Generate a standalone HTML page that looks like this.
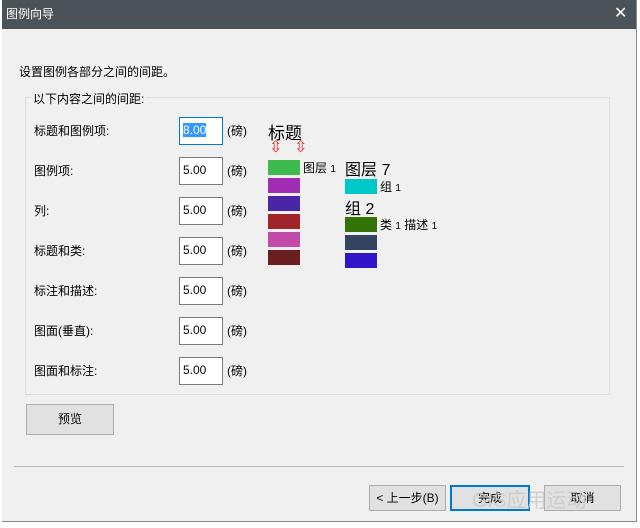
<!DOCTYPE html>
<html><head><meta charset="utf-8"><style>
body{margin:0;width:640px;height:528px;background:#fff;position:relative;overflow:hidden;font-family:"Liberation Sans","Noto Sans CJK SC",sans-serif;font-size:12px;color:#000}
.a{position:absolute}
.dlg{left:2px;top:0;width:634px;height:521px;background:#f0f0f0;border-right:1px solid #888;border-bottom:1px solid #888}
.tb{left:2px;top:0;width:634px;height:29px;background:#4b5359;color:#fff;font-size:12px}
.inp{background:#fff;border:1px solid #7a7a7a;font-size:12px;line-height:18px;padding-left:3px;box-sizing:border-box;width:44px;height:28px;padding-top:3px}
.btn{background:#e1e1e1;border:1px solid #adadad;box-sizing:border-box;text-align:center;font-size:12px}
.sw{width:32px;height:15px}
</style></head><body>
<div class="a dlg"></div>
<div class="a tb"><span class="a" style="left:4px;top:5px">图例向导</span><span class="a" style="left:612px;top:3px;font-size:16px">✕</span></div>
<div class="a" style="left:19px;top:63px">设置图例各部分之间的间距。</div>
<div class="a" style="left:25px;top:97px;width:583px;height:296px;border:1px solid #dcdcdc"></div>
<div class="a" style="left:31px;top:90px;background:#f0f0f0;padding:0 2px">以下内容之间的间距:</div>
<div class="a" style="left:34px;top:122px">标题和图例项:</div>
<div class="a" style="left:34px;top:162px">图例项:</div>
<div class="a" style="left:34px;top:202px">列:</div>
<div class="a" style="left:34px;top:242px">标题和类:</div>
<div class="a" style="left:34px;top:282px">标注和描述:</div>
<div class="a" style="left:34px;top:322px">图面(垂直):</div>
<div class="a" style="left:34px;top:362px">图面和标注:</div>
<div class="a inp" style="left:179px;top:117px;border:1px solid #0078d7"><span style="background:#3399ff;color:#fff">8.00</span></div>
<div class="a inp" style="left:179px;top:157px">5.00</div>
<div class="a inp" style="left:179px;top:197px">5.00</div>
<div class="a inp" style="left:179px;top:237px">5.00</div>
<div class="a inp" style="left:179px;top:277px">5.00</div>
<div class="a inp" style="left:179px;top:317px">5.00</div>
<div class="a inp" style="left:179px;top:357px">5.00</div>
<div class="a" style="left:227px;top:122px">(磅)</div>
<div class="a" style="left:227px;top:162px">(磅)</div>
<div class="a" style="left:227px;top:202px">(磅)</div>
<div class="a" style="left:227px;top:242px">(磅)</div>
<div class="a" style="left:227px;top:282px">(磅)</div>
<div class="a" style="left:227px;top:322px">(磅)</div>
<div class="a" style="left:227px;top:362px">(磅)</div>
<div class="a" style="left:268px;top:119px;font-size:17px">标题</div>
<div class="a" style="left:269px;top:140px;color:#e03030;font-size:16px;line-height:16px">⇳</div>
<div class="a" style="left:294px;top:140px;color:#e03030;font-size:16px;line-height:16px">⇳</div>
<div class="a sw" style="left:268px;top:160px;background:#3cba4c"></div>
<div class="a sw" style="left:268px;top:178px;background:#a02cb4"></div>
<div class="a sw" style="left:268px;top:196px;background:#4a26a6"></div>
<div class="a sw" style="left:268px;top:214px;background:#a0242a"></div>
<div class="a sw" style="left:268px;top:232px;background:#c24aa8"></div>
<div class="a sw" style="left:268px;top:250px;background:#6a1e20"></div>
<div class="a" style="left:303px;top:159px">图层 <span style="font-size:10px">1</span></div>
<div class="a" style="left:345px;top:156px;font-size:16px">图层 7</div>
<div class="a sw" style="left:345px;top:179px;background:#00c8c8"></div>
<div class="a" style="left:380px;top:178px">组 <span style="font-size:10px">1</span></div>
<div class="a" style="left:345px;top:195px;font-size:16px">组 2</div>
<div class="a sw" style="left:345px;top:217px;background:#317405"></div>
<div class="a" style="left:380px;top:216px">类 <span style="font-size:10px">1</span> 描述 <span style="font-size:10px">1</span></div>
<div class="a sw" style="left:345px;top:235px;background:#334460"></div>
<div class="a sw" style="left:345px;top:253px;background:#3014c8"></div>
<div class="a btn" style="left:26px;top:404px;width:88px;height:31px;line-height:29px">预览</div>
<div class="a" style="left:14px;top:466px;width:610px;height:1px;background:#bbb"></div>
<div class="a btn" style="left:369px;top:485px;width:77px;height:26px;line-height:24px">&lt; 上一步(B)</div>
<div class="a btn" style="left:450px;top:485px;width:80px;height:26px;line-height:22px;border:2px solid #0078d7">完成</div>
<div class="a btn" style="left:544px;top:485px;width:77px;height:26px;line-height:24px">取消</div>
<div class="a" style="left:472px;top:484px;color:#c8c8c8;font-size:20px;opacity:.8">GIS应用运动</div>
</body></html>
